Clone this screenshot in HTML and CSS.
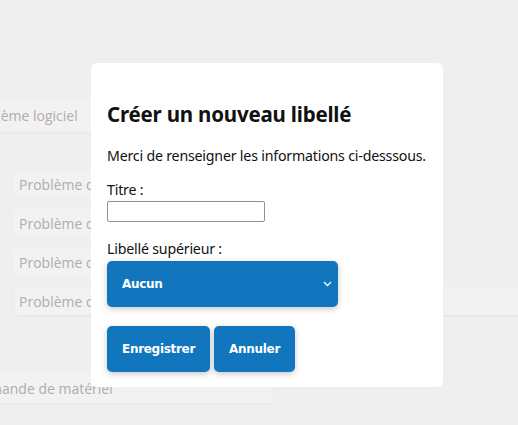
FILE: index.html
```html
<!DOCTYPE html>
<html lang="fr">
<head>
<meta charset="utf-8">
<title>Créer un nouveau libellé</title>
<link rel="stylesheet" href="styles.css">
</head>
<body>
<div class="page">
  <div class="card card-main">Problème logiciel</div>
  <ul class="subs">
    <li class="sub">Problème d'affichage</li>
    <li class="sub">Problème de connexion</li>
    <li class="sub">Problème de licence</li>
    <li class="sub sub-wide">Problème de performance</li>
  </ul>
  <div class="card card-bottom">Demande de matériel</div>
</div>

<div class="modal">
  <h2 class="modal-title">Créer un nouveau libellé</h2>
  <p class="modal-text">Merci de renseigner les informations ci-desssous.</p>
  <label class="field-label" for="titre">Titre :</label>
  <input class="text-input" id="titre" type="text">
  <label class="field-label field-label-2" for="parent">Libellé supérieur :</label>
  <div class="select-wrap">
    <select class="select" id="parent">
      <option>Aucun</option>
    </select>
    <svg class="chevron" width="9" height="6" viewBox="0 0 9 6"><path d="M1 1 L4.5 4.5 L8 1" fill="none" stroke="#fff" stroke-width="1.3"/></svg>
  </div>
  <div class="actions">
    <button class="btn" type="button">Enregistrer</button>
    <button class="btn" type="button">Annuler</button>
  </div>
</div>
</body>
</html>
```
FILE: styles.css
```css
html, body {
  margin: 0;
  padding: 0;
}
body {
  background: #efefef;
  width: 518px;
  height: 425px;
  overflow: hidden;
  position: relative;
  font-family: "Open Sans", "Noto Sans", sans-serif;
}
.page {
  padding-top: 98px;
  display: flex;
  flex-direction: column;
  align-items: flex-start;
}
.card {
  background: #f2f2f2;
  color: #b3aca9;
  font-size: 14px;
  box-shadow: 0 1px 3px rgba(0,0,0,0.04);
  border-radius: 4px;
  display: flex;
  align-items: center;
  white-space: nowrap;
}
.card-main {
  margin-left: -34px;
  width: 380px;
  height: 34px;
}
.subs {
  list-style: none;
  margin: 38px 0 0 14px;
  padding: 0;
  display: flex;
  flex-direction: column;
  gap: 11px;
}
.sub {
  background: #f2f2f2;
  color: #b3aca9;
  font-size: 14px;
  height: 28px;
  width: 380px;
  padding-left: 5px;
  box-sizing: border-box;
  border-radius: 4px;
  display: flex;
  align-items: center;
  white-space: nowrap;
}
.sub-wide {
  width: 530px;
  box-shadow: 0 1px 2px rgba(0,0,0,0.05);
}
.card-bottom {
  margin-top: 58px;
  margin-left: -29px;
  width: 302px;
  height: 30px;
}

.modal {
  position: absolute;
  left: 91px;
  top: 63px;
  width: 352px;
  height: 324px;
  box-sizing: border-box;
  background: #fff;
  border-radius: 6px;
  padding: 38px 16px 15px;
  font-family: "Noto Sans", sans-serif;
  color: #111;
  display: flex;
  flex-direction: column;
  align-items: flex-start;
}
.modal-title {
  margin: 0;
  font-size: 20.5px;
  font-weight: 700;
  letter-spacing: -0.2px;
  line-height: 26px;
  white-space: nowrap;
}
.modal-text {
  margin: 19px 0 0;
  font-size: 14.2px;
  letter-spacing: -0.2px;
  line-height: 20px;
  white-space: nowrap;
}
.field-label {
  margin-top: 14px;
  font-size: 14.2px;
  letter-spacing: -0.2px;
  line-height: 20px;
  white-space: nowrap;
}
.field-label-2 {
  margin-top: 17px;
}
.text-input {
  margin: 1px 0 0;
  width: 158px;
  height: 21px;
  box-sizing: border-box;
  border: 1px solid #8f8f9d;
  border-radius: 2px;
  padding: 0 4px;
  font-size: 13px;
}
.select-wrap {
  position: relative;
  margin-top: 2px;
  width: 231px;
  height: 46px;
}
.select {
  appearance: none;
  -webkit-appearance: none;
  width: 231px;
  height: 46px;
  margin: 0;
  border: none;
  border-radius: 5px;
  background: #1276be;
  color: #fff;
  font-family: "DejaVu Sans", sans-serif;
  font-weight: 700;
  font-size: 12px;
  letter-spacing: -0.3px;
  padding: 0 15px;
  box-shadow: 0 2px 6px rgba(0,0,0,0.22);
}
.chevron {
  position: absolute;
  right: 6px;
  top: 20px;
}
.actions {
  margin-top: 19px;
  display: flex;
  gap: 4px;
}
.btn {
  height: 46px;
  border: none;
  border-radius: 5px;
  background: #1276be;
  color: #fff;
  font-family: "DejaVu Sans", sans-serif;
  font-weight: 700;
  font-size: 12px;
  letter-spacing: -0.3px;
  padding: 0 15px;
  box-shadow: 0 2px 6px rgba(0,0,0,0.22);
}
```
